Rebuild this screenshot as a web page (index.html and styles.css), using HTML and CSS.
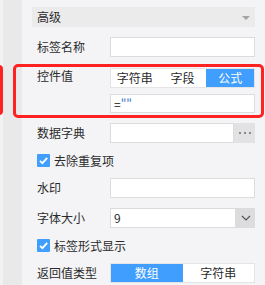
FILE: index.html
```
<!DOCTYPE html>
<html lang="zh">
<head>
    <meta charset="UTF-8">
    <title>属性面板</title>
    <link rel="stylesheet" href="styles.css">
</head>
<body>
    <div class="sidebar"></div>
    <div class="panel">
        <div class="section-head">
            <span>高级</span>
            <span class="caret"></span>
        </div>

        <div class="row">
            <label class="label">标签名称</label>
            <div class="field input"></div>
        </div>

        <div class="row row-tall">
            <label class="label label-top">控件值</label>
            <div class="field stack">
                <div class="seg">
                    <span class="seg-item">字符串</span>
                    <span class="seg-item">字段</span>
                    <span class="seg-item active">公式</span>
                </div>
                <div class="input formula">=<span class="quote">""</span></div>
            </div>
        </div>

        <div class="row">
            <label class="label">数据字典</label>
            <div class="field combo">
                <div class="input grow"></div>
                <span class="combo-btn">
                    <svg width="12" height="3" viewBox="0 0 12 3"><rect x="0" y="0" width="2" height="2" fill="#8a8a8a"/><rect x="5" y="0" width="2" height="2" fill="#8a8a8a"/><rect x="10" y="0" width="2" height="2" fill="#8a8a8a"/></svg>
                </span>
            </div>
        </div>

        <div class="check-row">
            <span class="checkbox">
                <svg width="13" height="13" viewBox="0 0 13 13"><path d="M3 6.8 L5.4 9.2 L10.2 3.8" fill="none" stroke="#fff" stroke-width="1.8"/></svg>
            </span>
            <span>去除重复项</span>
        </div>

        <div class="row">
            <label class="label">水印</label>
            <div class="field input"></div>
        </div>

        <div class="row">
            <label class="label">字体大小</label>
            <div class="field combo">
                <div class="input grow value">9</div>
                <span class="combo-btn select-btn">
                    <svg width="10" height="6" viewBox="0 0 10 6"><path d="M1 1 L5 5 L9 1" fill="none" stroke="#555" stroke-width="1.2"/></svg>
                </span>
            </div>
        </div>

        <div class="check-row">
            <span class="checkbox">
                <svg width="13" height="13" viewBox="0 0 13 13"><path d="M3 6.8 L5.4 9.2 L10.2 3.8" fill="none" stroke="#fff" stroke-width="1.8"/></svg>
            </span>
            <span>标签形式显示</span>
        </div>

        <div class="row">
            <label class="label">返回值类型</label>
            <div class="field seg">
                <span class="seg-item active">数组</span>
                <span class="seg-item">字符串</span>
            </div>
        </div>
    </div>

    <div class="highlight"></div>
    <div class="highlight-edge"></div>
</body>
</html>
```

FILE: styles.css
```
body {
    margin: 0;
    width: 265px;
    height: 285px;
    overflow: hidden;
    display: flex;
    background-color: #f4f4f6;
    font-family: "Noto Sans CJK SC", "Noto Sans", sans-serif;
    font-size: 12px;
    color: #2b2b2b;
    position: relative;
}
.sidebar {
    width: 19px;
    border-left: 3px solid #f2f2f2;
    background-color: #e9e9e9;
    flex-shrink: 0;
}
.panel {
    flex: 1;
    padding: 7px 10px 0 10px;
}
.section-head {
    height: 20px;
    background-color: #ebebeb;
    display: flex;
    align-items: center;
    justify-content: space-between;
    padding: 0 5px;
    line-height: 20px;
}
.caret {
    width: 0;
    height: 0;
    border-left: 4px solid transparent;
    border-right: 4px solid transparent;
    border-top: 4px solid #a3a3a3;
    margin-top: 2px;
}
.row {
    display: flex;
    align-items: center;
    height: 20px;
    margin-top: 10px;
    padding-left: 5px;
}
.row-tall {
    height: auto;
    align-items: flex-start;
    margin-top: 11px;
}
.check-row + .row {
    margin-top: 11px;
}
.label {
    width: 73px;
    flex-shrink: 0;
    line-height: 20px;
}
.label-top {
    line-height: 16px;
}
.field {
    flex: 1;
    height: 20px;
}
.stack {
    height: auto;
    display: flex;
    flex-direction: column;
}
.input {
    box-sizing: border-box;
    height: 20px;
    background-color: #fff;
    border: 1px solid #dcdcdc;
}
.formula {
    height: 19px;
    margin-top: 6px;
    padding-left: 3px;
    line-height: 17px;
    color: #111;
}
.quote {
    color: #3d72c4;
}
.value {
    padding-left: 3px;
    line-height: 18px;
}
.combo {
    display: flex;
}
.grow {
    flex: 1;
}
.combo-btn {
    width: 21px;
    background-color: #e2e2e4;
    display: flex;
    align-items: center;
    justify-content: center;
}
.select-btn {
    width: 19px;
    background-color: #dcdcde;
}
.seg {
    box-sizing: border-box;
    display: flex;
    height: 20px;
    background-color: #fff;
    border: 1px solid #e4e4e4;
}
.seg-item {
    flex: 1;
    text-align: center;
    line-height: 18px;
}
.seg-item.active {
    background-color: #409eff;
    color: #fff;
}
.check-row {
    display: flex;
    align-items: center;
    height: 13px;
    margin-top: 11px;
    padding-left: 5px;
    gap: 4px;
    line-height: 13px;
}
.checkbox {
    width: 13px;
    height: 13px;
    background-color: #409eff;
    border-radius: 1px;
    display: flex;
}
.highlight {
    position: absolute;
    left: 13px;
    top: 64px;
    width: 251px;
    height: 54px;
    box-sizing: border-box;
    border: 3px solid #ff2222;
    border-radius: 5px;
}
.highlight-edge {
    position: absolute;
    left: -10px;
    top: 65px;
    width: 13px;
    height: 50px;
    box-sizing: border-box;
    border: 3px solid #ff2222;
    border-radius: 4px;
}
```
